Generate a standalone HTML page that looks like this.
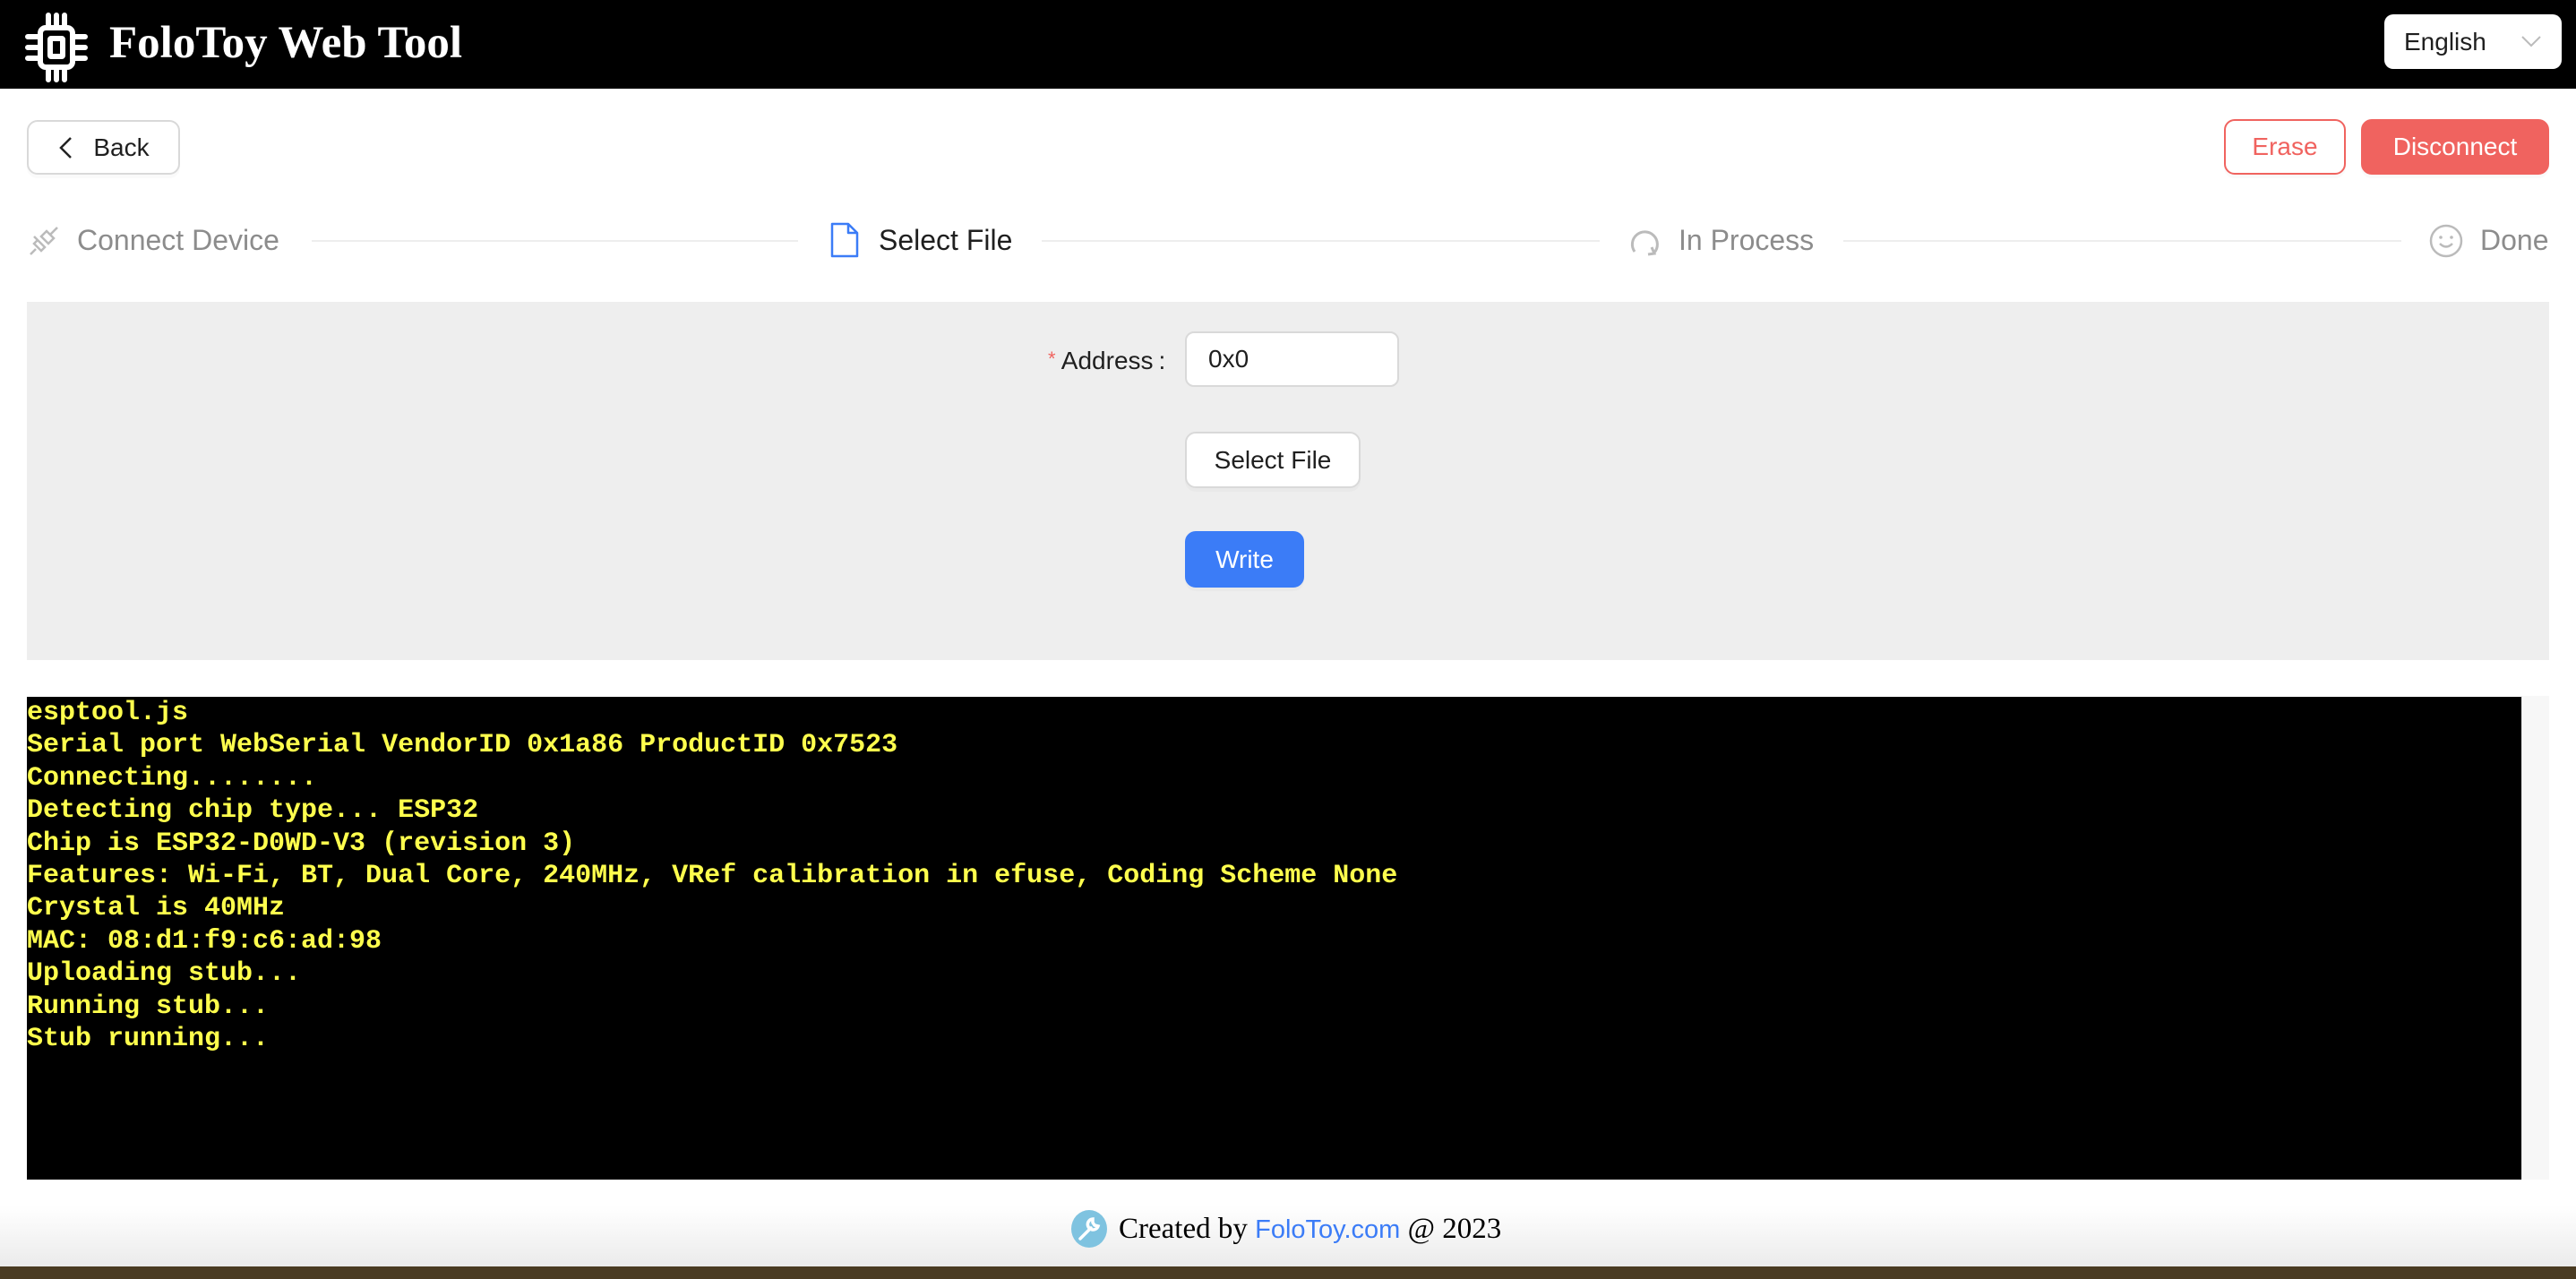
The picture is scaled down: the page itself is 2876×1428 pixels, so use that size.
<!DOCTYPE html>
<html><head><meta charset="utf-8"><style>
*{margin:0;padding:0;box-sizing:border-box}
body{width:2876px;height:1428px;position:relative;background:#fff;font-family:"Liberation Sans",sans-serif;overflow:hidden;color:#1f1f1f}
.a{position:absolute}
.btn{position:absolute;border:2px solid #d9d9d9;border-radius:12px;background:#fff;font-size:28px;display:flex;align-items:center;justify-content:center;box-shadow:0 4px 0 rgba(0,0,0,0.02)}
.step{position:absolute;font-size:32px;color:#8c8c8c;top:248px;line-height:40px}
.line{position:absolute;top:268px;height:2px;background:#eeeeee}
pre{position:absolute;left:30px;top:778px;width:2785px;height:539px;background:#000;color:#ffff4d;font-family:"Liberation Mono",monospace;font-weight:bold;font-size:30px;line-height:36.4px}
</style></head><body>
<div class="a" style="left:0;top:0;width:2876px;height:99px;background:#000"></div>
<svg class="a" style="left:28px;top:13px" width="70" height="80" viewBox="0 0 70 80">
<g fill="none" stroke="#fff" stroke-width="6" stroke-linecap="round">
<rect x="17" y="18" width="36" height="44" rx="6"/>
<rect x="28" y="30" width="14" height="20" rx="1"/>
<path d="M26 4v12M35 4v12M44 4v12M26 64v12M35 64v12M44 64v12M3 28h11M3 40h11M3 52h11M56 28h11M56 40h11M56 52h11"/>
</g></svg>
<div class="a" style="left:122px;top:15px;color:#fff;font-family:'Liberation Serif',serif;font-weight:bold;font-size:51px;line-height:66px">FoloToy Web Tool</div>
<div class="a" style="left:2662px;top:16px;width:198px;height:61px;background:#fff;border-radius:10px;font-size:28px;line-height:61px;padding-left:22px">English<svg class="a" style="left:152px;top:22px" width="24" height="16"><path d="M2 3l10 10 10-10" fill="none" stroke="#bbb" stroke-width="2"/></svg></div>

<div class="btn" style="left:30px;top:134px;width:171px;height:61px"><svg width="18" height="26" style="margin-right:22px"><path d="M15 2L4 13l11 11" fill="none" stroke="#222" stroke-width="2.5"/></svg>Back</div>
<div class="btn" style="left:2483px;top:133px;width:136px;height:62px;border-color:#f0635f;color:#f0635f">Erase</div>
<div class="btn" style="left:2636px;top:133px;width:210px;height:62px;border-color:#f0635f;background:#f0635f;color:#fff">Disconnect</div>

<svg class="a" style="left:30px;top:250px" width="38" height="38" viewBox="0 0 38 38"><g fill="none" stroke="#bbb" stroke-width="2.5"><path d="M22 8l8 8-6 6-8-8zM26 12l8-8M14 20l4 4M16 30l-8-8 4-4 8 8zM4 34l6-6M12 18l-4-4"/></g></svg>
<div class="step" style="left:86px">Connect Device</div>
<div class="line" style="left:348px;width:543px"></div>
<svg class="a" style="left:926px;top:247px" width="34" height="42" viewBox="0 0 34 42"><path d="M3 3h18l10 10v26H3z M21 3v10h10" fill="none" stroke="#3b7cf7" stroke-width="2.5" stroke-linejoin="round"/></svg>
<div class="step" style="left:981px;color:#1f1f1f">Select File</div>
<div class="line" style="left:1163px;width:623px"></div>
<svg class="a" style="left:1817px;top:249px" width="40" height="40" viewBox="0 0 40 40"><path d="M8 32A14 14 0 1 1 30 33" fill="none" stroke="#bbb" stroke-width="3"/><path d="M27 27l3 7-7 1" fill="none" stroke="#bbb" stroke-width="3"/></svg>
<div class="step" style="left:1874px">In Process</div>
<div class="line" style="left:2058px;width:623px"></div>
<svg class="a" style="left:2711px;top:249px" width="40" height="40" viewBox="0 0 40 40"><circle cx="20" cy="20" r="17" fill="none" stroke="#bbb" stroke-width="2.5"/><circle cx="14" cy="16" r="1.8" fill="#bbb"/><circle cx="26" cy="16" r="1.8" fill="#bbb"/><path d="M13 23q7 7 14 0" fill="none" stroke="#bbb" stroke-width="2.5"/></svg>
<div class="step" style="left:2769px">Done</div>

<div class="a" style="left:30px;top:337px;width:2816px;height:400px;background:#eeeeee"></div>
<div class="a" style="left:1170px;top:383px;font-size:28px;line-height:36px"><span style="color:#f0635f;font-size:22px;vertical-align:4px">*</span> Address<span style="margin-left:6px">:</span></div>
<div class="a" style="left:1323px;top:370px;width:239px;height:62px;background:#fff;border:2px solid #d9d9d9;border-radius:10px;font-size:28px;line-height:58px;padding-left:24px">0x0</div>
<div class="btn" style="left:1323px;top:482px;width:196px;height:63px">Select File</div>
<div class="btn" style="left:1323px;top:593px;width:133px;height:63px;background:#3b7cf7;border-color:#3b7cf7;color:#fff">Write</div>

<pre>esptool.js
Serial port WebSerial VendorID 0x1a86 ProductID 0x7523
Connecting........
Detecting chip type... ESP32
Chip is ESP32-D0WD-V3 (revision 3)
Features: Wi-Fi, BT, Dual Core, 240MHz, VRef calibration in efuse, Coding Scheme None
Crystal is 40MHz
MAC: 08:d1:f9:c6:ad:98
Uploading stub...
Running stub...
Stub running...</pre>
<div class="a" style="left:2815px;top:777px;width:31px;height:540px;background:#f7f7f7;border-left:1px solid #e6e6e6"></div>

<div class="a" style="left:0;top:1317px;width:2876px;height:97px;background:linear-gradient(#fff 30%,#ebebeb)"></div>
<svg class="a" style="left:1196px;top:1351px" width="40" height="42" viewBox="0 0 40 42"><ellipse cx="20" cy="21" rx="20" ry="21" fill="#7fc3e0"/><path d="M10 32l12-12M24 10a6 6 0 1 0 6 8l-4-1-2-3z" fill="none" stroke="#fff" stroke-width="3.5" stroke-linecap="round"/></svg>
<div class="a" style="left:1249px;top:1350px;font-family:'Liberation Serif',serif;font-size:33px;line-height:44px;color:#000;white-space:nowrap">Created by <span style="font-family:'Liberation Sans',sans-serif;color:#3b7cf7;font-size:29px">FoloToy.com</span> @ 2023</div>
<div class="a" style="left:0;top:1414px;width:2876px;height:14px;background:#4a3b22"></div>
</body></html>
